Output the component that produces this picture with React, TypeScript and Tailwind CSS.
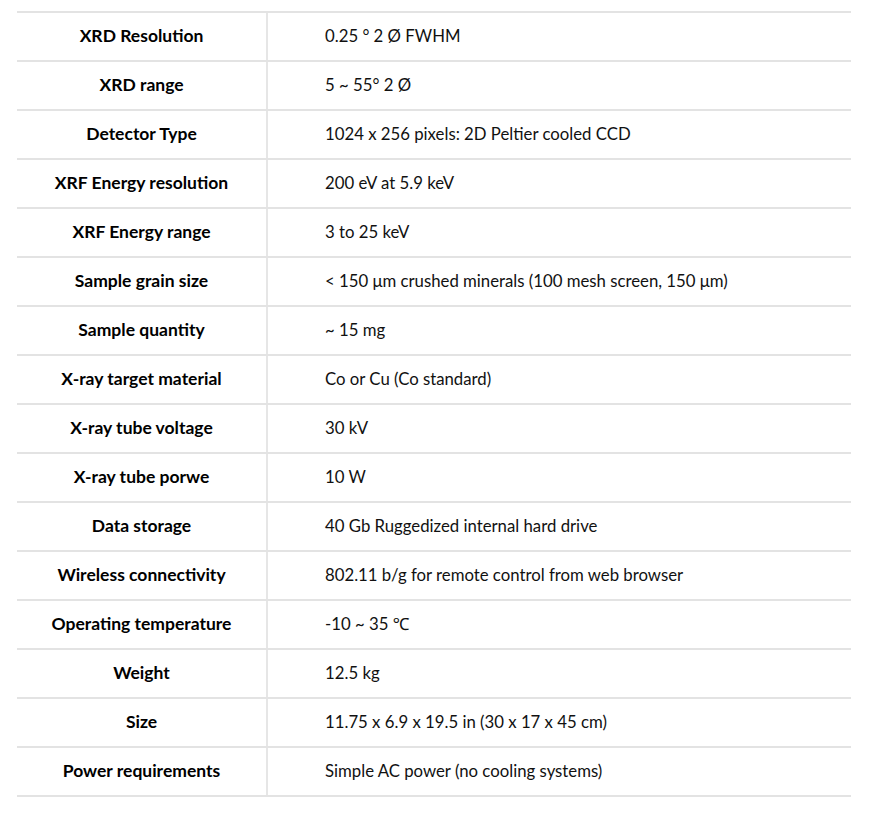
const specs: [string, string][] = [
  ['XRD Resolution', '0.25 ° 2 Ø FWHM'],
  ['XRD range', '5 ~ 55° 2 Ø'],
  ['Detector Type', '1024 x 256 pixels: 2D Peltier cooled CCD'],
  ['XRF Energy resolution', '200 eV at 5.9 keV'],
  ['XRF Energy range', '3 to 25 keV'],
  ['Sample grain size', '< 150 μm crushed minerals (100 mesh screen, 150 μm)'],
  ['Sample quantity', '~ 15 mg'],
  ['X-ray target material', 'Co or Cu (Co standard)'],
  ['X-ray tube voltage', '30 kV'],
  ['X-ray tube porwe', '10 W'],
  ['Data storage', '40 Gb Ruggedized internal hard drive'],
  ['Wireless connectivity', '802.11 b/g for remote control from web browser'],
  ['Operating temperature', '-10 ~ 35 ℃'],
  ['Weight', '12.5 kg'],
  ['Size', '11.75 x 6.9 x 19.5 in (30 x 17 x 45 cm)'],
  ['Power requirements', 'Simple AC power (no cooling systems)'],
];

export default function App() {
  return (
    <div
      className="min-h-screen bg-white pl-[17px] pr-[18px] pt-[11px] text-black"
      style={{ fontFamily: 'Lato, "Noto Sans", sans-serif' }}
    >
      <div className="border-t-2 border-[#e3e3e3]">
        {specs.map(([label, value]) => (
          <div key={label} className="grid h-[49px] grid-cols-[251px_1fr] border-b-2 border-[#e3e3e3]">
            <div className="flex items-center justify-center border-r-2 border-[#e6e6e6] pb-[1px] text-[17.5px] font-bold">
              {label}
            </div>
            <div className="flex items-center pb-[1px] pl-[57px] text-[16.75px] text-[#111]">{value}</div>
          </div>
        ))}
      </div>
    </div>
  );
}
